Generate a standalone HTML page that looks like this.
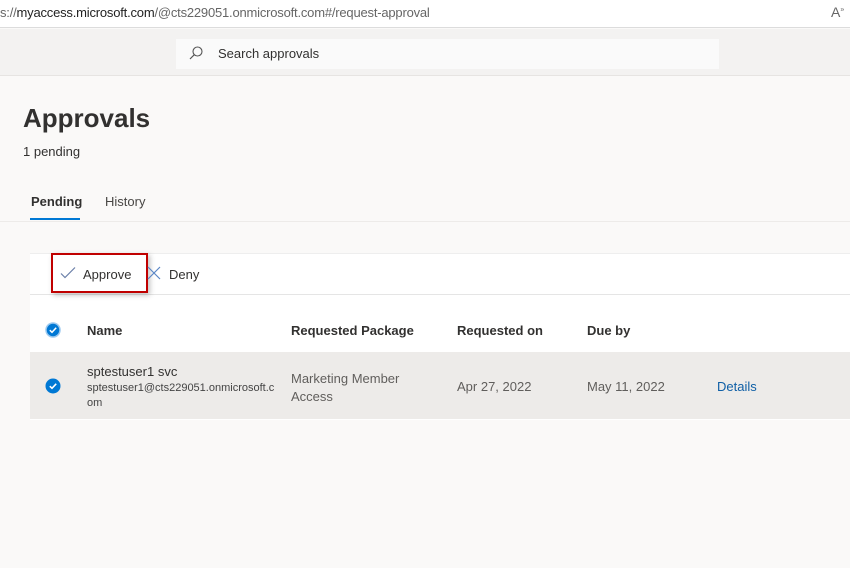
<!DOCTYPE html>
<html><head><style>
*{margin:0;padding:0;box-sizing:border-box}
body{width:850px;height:568px;overflow:hidden;background:#faf9f8;font-family:"Liberation Sans",sans-serif;color:#323130;position:relative}
.a{position:absolute;white-space:nowrap}
</style></head><body>
<div class="a" style="left:0;top:0;width:850px;height:28px;background:#fff;border-bottom:1px solid #dcdcdc"></div>
<div class="a" style="left:0;top:5px;font-size:13px;color:#666;letter-spacing:-0.2px">s://<span style="color:#222">myaccess.microsoft.com</span>/@cts229051.onmicrosoft.com#/request-approval</div>
<div class="a" style="left:831px;top:4px;font-size:14px;color:#666">A<sup style="font-size:7px">»</sup></div>
<div class="a" style="left:0;top:29px;width:850px;height:47px;background:#f3f2f1;border-bottom:1px solid #e6e4e2"></div>
<div class="a" style="left:176px;top:39px;width:543px;height:30px;background:#fafafa"></div>
<svg class="a" style="left:188px;top:45px" width="16" height="16" viewBox="0 0 16 16"><circle cx="9.5" cy="6.5" r="4.5" fill="none" stroke="#555" stroke-width="1.1"/><path d="M6.3 9.7 2 14" stroke="#555" stroke-width="1.2"/></svg>
<div class="a" style="left:218px;top:46px;font-size:13px;color:#323130">Search approvals</div>
<div class="a" style="left:23px;top:103px;font-size:26px;font-weight:bold;color:#323130">Approvals</div>
<div class="a" style="left:23px;top:144px;font-size:13px">1 pending</div>
<div class="a" style="left:31px;top:194px;font-size:13px;font-weight:bold">Pending</div>
<div class="a" style="left:30px;top:218px;width:50px;height:2px;background:#0078d4"></div>
<div class="a" style="left:105px;top:194px;font-size:13px;color:#484644">History</div>
<div class="a" style="left:0;top:221px;width:850px;height:1px;background:#edebe9"></div>
<div class="a" style="left:30px;top:253px;width:820px;height:167px;background:#fff;border-top:1px solid #eee"></div>
<div class="a" style="left:30px;top:294px;width:820px;height:1px;background:#e5e5e5"></div>
<div class="a" style="left:51px;top:253px;width:97px;height:40px;border:2px solid #c00000;box-shadow:2px 2px 5px rgba(0,0,0,.25)"></div>
<svg class="a" style="left:60px;top:266px" width="16" height="14" viewBox="0 0 16 14"><path d="M1 7.5 5 11.5 15 1.5" fill="none" stroke="#6a7fa8" stroke-width="1.2"/></svg>
<div class="a" style="left:83px;top:267px;font-size:13px">Approve</div>
<svg class="a" style="left:147px;top:266px" width="14" height="14" viewBox="0 0 14 14"><path d="M1 1 13 13M13 1 1 13" stroke="#5a86c5" stroke-width="1.2"/></svg>
<div class="a" style="left:169px;top:267px;font-size:13px">Deny</div>
<svg class="a" style="left:45px;top:322px" width="16" height="16" viewBox="0 0 16 16"><circle cx="8" cy="8" r="7" fill="#0078d4" stroke="#9cc9ef" stroke-width="1.5"/><path d="M4.8 8.2 7 10.3 11.2 5.8" fill="none" stroke="#fff" stroke-width="1.5"/></svg>
<div class="a" style="left:87px;top:323px;font-size:13px;font-weight:bold">Name</div>
<div class="a" style="left:291px;top:323px;font-size:13px;font-weight:bold">Requested Package</div>
<div class="a" style="left:457px;top:323px;font-size:13px;font-weight:bold">Requested on</div>
<div class="a" style="left:587px;top:323px;font-size:13px;font-weight:bold">Due by</div>
<div class="a" style="left:30px;top:352px;width:820px;height:67px;background:#edebe9"></div>
<svg class="a" style="left:45px;top:378px" width="16" height="16" viewBox="0 0 16 16"><circle cx="8" cy="8" r="7.5" fill="#0078d4"/><path d="M4.8 8.2 7 10.3 11.2 5.8" fill="none" stroke="#fff" stroke-width="1.6"/></svg>
<div class="a" style="left:87px;top:364px;font-size:13px">sptestuser1 svc</div>
<div class="a" style="left:87px;top:381px;font-size:11px;color:#444;line-height:15px">sptestuser1@cts229051.onmicrosoft.c<br>om</div>
<div class="a" style="left:291px;top:370px;font-size:13px;color:#605e5c;line-height:18px">Marketing Member<br>Access</div>
<div class="a" style="left:457px;top:379px;font-size:13px;color:#605e5c">Apr 27, 2022</div>
<div class="a" style="left:587px;top:379px;font-size:13px;color:#605e5c">May 11, 2022</div>
<div class="a" style="left:717px;top:379px;font-size:13px;color:#0f5fa6">Details</div>
</body></html>
